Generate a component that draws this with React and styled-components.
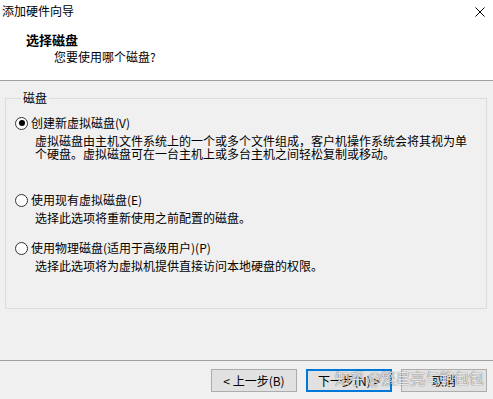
import React, {useState} from 'react'
import styled, {createGlobalStyle} from "styled-components"

const GlobalStyle = createGlobalStyle`
  html, body {
    margin: 0;
    padding: 0;
    background: #f0f0f0;
  }
  body {
    font-family: "Noto Sans CJK SC", "Microsoft YaHei", sans-serif;
    font-size: 12px;
    color: #000;
  }
`

const options = [
	{
		id: "new",
		label: "创建新虚拟磁盘(V)",
		desc: ["虚拟磁盘由主机文件系统上的一个或多个文件组成，客户机操作系统会将其视为单", "个硬盘。虚拟磁盘可在一台主机上或多台主机之间轻松复制或移动。"],
		gap: 10,
	},
	{
		id: "existing",
		label: "使用现有虚拟磁盘(E)",
		desc: ["选择此选项将重新使用之前配置的磁盘。"],
		gap: 32,
	},
	{
		id: "physical",
		label: "使用物理磁盘(适用于高级用户)(P)",
		desc: ["选择此选项将为虚拟机提供直接访问本地硬盘的权限。"],
		gap: 16,
	},
]

const App = () => {
	const [selected, setSelected] = useState("new")

	return (
		<Window>
			<GlobalStyle/>
			<TitleBar>
				<span>添加硬件向导</span>
				<CloseButton type={"button"} aria-label="关闭">
					<svg width="10" height="10" viewBox="0 0 10 10">
						<path d="M0.5 0.5 L9.5 9.5 M9.5 0.5 L0.5 9.5" stroke="#000" strokeWidth="1" fill="none"/>
					</svg>
				</CloseButton>
			</TitleBar>
			<Header>
				<Heading>选择磁盘</Heading>
				<SubHeading>您要使用哪个磁盘?</SubHeading>
			</Header>
			<Body>
				<GroupBox>
					<legend>磁盘</legend>
					{options.map((item) => (
						<Option key={item.id} $gap={item.gap}>
							<RadioRow onClick={() => setSelected(item.id)}>
								<Radio $checked={selected === item.id}/>
								<span>{item.label}</span>
							</RadioRow>
							<Desc>
								{item.desc.map((line) => <div key={line}>{line}</div>)}
							</Desc>
						</Option>
					))}
				</GroupBox>
			</Body>
			<Footer>
				<Button type={"button"}>&lt; 上一步(B)</Button>
				<Button type={"button"} $primary>下一步(N) &gt;</Button>
				<Button type={"button"}>取消</Button>
				<Watermark>知乎 @繁星亮与鲍包包</Watermark>
			</Footer>
		</Window>
	)
}

export default App

const Window = styled.div`
  width: 493px;
  height: 399px;
  display: flex;
  flex-direction: column;
  background: #f0f0f0;
  overflow: hidden;
`

const TitleBar = styled.div`
  height: 22px;
  display: flex;
  align-items: center;
  justify-content: space-between;
  padding: 0 8px 0 2px;
  background: #fff;
  line-height: 22px;
`

const CloseButton = styled.button`
  width: 10px;
  height: 10px;
  padding: 0;
  border: none;
  background: transparent;
  display: flex;
  margin-top: 1px;

  svg {
    display: block;
  }
`

const Header = styled.div`
  height: 59px;
  box-sizing: border-box;
  background: #fff;
  border-bottom: 1px solid #a0a0a0;
  padding: 10px 0 0 26px;
`

const Heading = styled.div`
  font-weight: 700;
  font-size: 13px;
  line-height: 16px;
`

const SubHeading = styled.div`
  margin-top: 1px;
  padding-left: 28px;
  line-height: 16px;
`

const Body = styled.div`
  flex: 1;
  padding: 10px 6px 0 5px;
`

const GroupBox = styled.fieldset`
  margin: 0;
  height: 218px;
  box-sizing: border-box;
  border: 1px solid #dcdcdc;
  padding: 0 8px 0 9px;

  legend {
    padding: 0 2px;
    margin-left: 6px;
    line-height: 14px;
  }
`

const Option = styled.div`
  margin-top: ${({$gap}) => $gap}px;
`

const RadioRow = styled.label`
  display: flex;
  align-items: center;
  gap: 3px;
  height: 16px;
  line-height: 16px;
  cursor: default;
`

const Radio = styled.span`
  width: 11px;
  height: 11px;
  border: 1px solid #333;
  border-radius: 50%;
  background: #fff;
  position: relative;
  flex-shrink: 0;

  &::after {
    content: "";
    display: ${({$checked}) => $checked ? "block" : "none"};
    position: absolute;
    left: 2.5px;
    top: 2.5px;
    width: 6px;
    height: 6px;
    border-radius: 50%;
    background: #000;
  }
`

const Desc = styled.div`
  margin-top: 3px;
  padding-left: 20px;
  line-height: 13px;
  white-space: nowrap;
`

const Footer = styled.div`
  position: relative;
  height: 39px;
  box-sizing: border-box;
  border-top: 1px solid #a0a0a0;
  display: flex;
  justify-content: flex-end;
  align-items: flex-start;
  gap: 9px;
  padding: 8px 6px 0 0;
`

const Button = styled.button`
  width: 86px;
  height: 23px;
  box-sizing: border-box;
  background: #e1e1e1;
  border: ${({$primary}) => $primary ? "2px solid #0078d7" : "1px solid #adadad"};
  font-family: inherit;
  font-size: 12px;
  color: #000;
  padding: 0;
  line-height: 1;
`

const Watermark = styled.div`
  position: absolute;
  left: 335px;
  top: 8px;
  font-size: 15px;
  line-height: 18px;
  letter-spacing: -0.4px;
  color: rgba(255, 255, 255, 0.85);
  text-shadow: 0 0 1px rgba(0, 0, 0, 0.55), 0 0 1px rgba(0, 0, 0, 0.35);
  pointer-events: none;
  white-space: nowrap;
`
